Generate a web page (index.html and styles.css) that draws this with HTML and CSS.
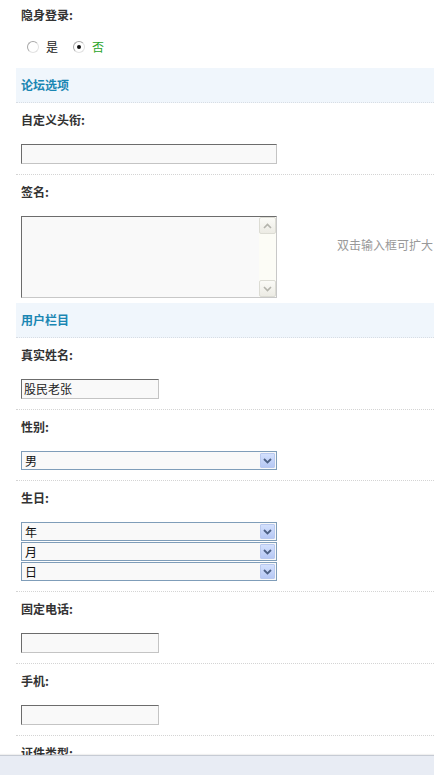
FILE: index.html
```html
<!DOCTYPE html>
<html lang="zh-CN">
<head>
<meta charset="utf-8">
<title>个人资料</title>
<link rel="stylesheet" href="styles.css">
</head>
<body>
<div class="page">
  <div class="row row-first">
    <div class="label">隐身登录:</div>
    <div class="radios">
      <span class="radio"></span><span class="opt">是</span>
      <span class="radio checked"></span><span class="opt opt-on">否</span>
    </div>
  </div>

  <div class="section">论坛选项</div>

  <div class="row">
    <div class="label">自定义头衔:</div>
    <div class="input input-long"></div>
  </div>

  <div class="row row-sign">
    <div class="label">签名:</div>
    <div class="sign-line">
      <div class="textarea">
        <div class="ta-body"></div>
        <div class="scrollbar">
          <span class="sb-btn">
            <svg width="9" height="6" viewBox="0 0 9 6"><path d="M1 5 L4.5 1.5 L8 5" fill="none" stroke="#b4b4ac" stroke-width="1.6"/></svg>
          </span>
          <span class="sb-track"></span>
          <span class="sb-btn">
            <svg width="9" height="6" viewBox="0 0 9 6"><path d="M1 1 L4.5 4.5 L8 1" fill="none" stroke="#b4b4ac" stroke-width="1.6"/></svg>
          </span>
        </div>
      </div>
      <div class="hint">双击输入框可扩大，</div>
    </div>
  </div>

  <div class="section">用户栏目</div>

  <div class="row">
    <div class="label">真实姓名:</div>
    <div class="input input-short">股民老张</div>
  </div>

  <div class="row">
    <div class="label">性别:</div>
    <div class="select">
      <span class="sel-text">男</span>
      <span class="sel-btn"><svg width="9" height="6" viewBox="0 0 9 6"><path d="M1 1 L4.5 4.5 L8 1" fill="none" stroke="#4d6185" stroke-width="1.8"/></svg></span>
    </div>
  </div>

  <div class="row">
    <div class="label">生日:</div>
    <div class="select-stack">
      <div class="select">
        <span class="sel-text">年</span>
        <span class="sel-btn"><svg width="9" height="6" viewBox="0 0 9 6"><path d="M1 1 L4.5 4.5 L8 1" fill="none" stroke="#4d6185" stroke-width="1.8"/></svg></span>
      </div>
      <div class="select">
        <span class="sel-text">月</span>
        <span class="sel-btn"><svg width="9" height="6" viewBox="0 0 9 6"><path d="M1 1 L4.5 4.5 L8 1" fill="none" stroke="#4d6185" stroke-width="1.8"/></svg></span>
      </div>
      <div class="select">
        <span class="sel-text">日</span>
        <span class="sel-btn"><svg width="9" height="6" viewBox="0 0 9 6"><path d="M1 1 L4.5 4.5 L8 1" fill="none" stroke="#4d6185" stroke-width="1.8"/></svg></span>
      </div>
    </div>
  </div>

  <div class="row">
    <div class="label">固定电话:</div>
    <div class="input input-short"></div>
  </div>

  <div class="row">
    <div class="label">手机:</div>
    <div class="input input-short"></div>
  </div>

  <div class="row">
    <div class="label">证件类型:</div>
    <div class="input input-short"></div>
  </div>
</div>
<div class="statusbar"></div>
</body>
</html>
```
FILE: styles.css
```css
html, body {
  margin: 0;
  padding: 0;
  background: #ffffff;
  overflow: hidden;
}
body {
  font-family: "Noto Sans CJK SC", "Liberation Sans", sans-serif;
  font-size: 12px;
  color: #333333;
}
.page {
  width: 640px;
  padding-left: 16px;
  display: flex;
  flex-direction: column;
}
.row {
  padding: 7px 0 10px 5px;
  border-bottom: 1px dotted #d4d4d4;
  display: flex;
  flex-direction: column;
  align-items: flex-start;
}
.row-first {
  padding-top: 5px;
  padding-bottom: 12px;
  border-bottom: none;
}
.row-sign {
  padding-bottom: 5px;
  border-bottom: none;
}
.label {
  line-height: 20px;
  height: 20px;
  font-weight: bold;
  color: #333333;
  margin-bottom: 14px;
}
.row-first .label {
  margin-bottom: 13px;
}
.radios {
  display: flex;
  align-items: center;
  height: 18px;
  padding-left: 6px;
}
.radio {
  width: 10px;
  height: 10px;
  border-radius: 50%;
  border: 1px solid #a8a8a8;
  border-right-color: #e2e2e2;
  border-bottom-color: #e2e2e2;
  background: #ffffff;
  display: flex;
  align-items: center;
  justify-content: center;
}
.radio.checked::after {
  content: "";
  width: 4px;
  height: 4px;
  border-radius: 50%;
  background: #111111;
}
.opt {
  margin-left: 7px;
  margin-right: 15px;
  line-height: 16px;
  color: #222222;
}
.opt-on {
  color: #2aa52a;
}
.section {
  height: 34px;
  line-height: 34px;
  padding-left: 5px;
  background: #f0f6fc;
  border-bottom: 1px dotted #d8dde4;
  color: #1a86b3;
  font-weight: bold;
}
.input {
  height: 18px;
  line-height: 18px;
  border: 1px solid #c4c4c4;
  border-top-color: #6c6c6c;
  border-left-color: #6c6c6c;
  background: #f9f9f9;
  padding-left: 2px;
  color: #222222;
  box-sizing: content-box;
}
.input-long {
  width: 252px;
}
.input-short {
  width: 134px;
}
.sign-line {
  display: flex;
  align-items: flex-start;
}
.textarea {
  width: 254px;
  height: 80px;
  border: 1px solid #c8c8c8;
  border-top-color: #6c6c6c;
  border-left-color: #6c6c6c;
  background: #f9f9f9;
  display: flex;
}
.ta-body {
  flex: 1;
}
.scrollbar {
  width: 17px;
  background: #fcfcf6;
  display: flex;
  flex-direction: column;
}
.sb-btn {
  width: 15px;
  height: 15px;
  border: 1px solid #dcdcd4;
  border-radius: 2px;
  background: linear-gradient(#fbfbf7, #ecebe4);
  display: flex;
  align-items: center;
  justify-content: center;
}
.sb-track {
  flex: 1;
}
.hint {
  margin-left: 60px;
  margin-top: 21px;
  line-height: 16px;
  color: #999999;
  white-space: nowrap;
}
.select-stack {
  display: flex;
  flex-direction: column;
  gap: 1px;
}
.select {
  width: 254px;
  height: 17px;
  border: 1px solid #7f9db9;
  background: #f9f9f9;
  display: flex;
  align-items: center;
}
.sel-text {
  flex: 1;
  padding-left: 3px;
  line-height: 17px;
  color: #111111;
}
.sel-btn {
  width: 15px;
  height: 15px;
  margin-right: 1px;
  border: 1px solid #b9c9ef;
  border-radius: 1px;
  box-sizing: border-box;
  background: linear-gradient(#d3e0fd, #b6c8f4);
  display: flex;
  align-items: center;
  justify-content: center;
}
.statusbar {
  position: fixed;
  left: 0;
  right: 0;
  bottom: 0;
  height: 19px;
  background: #e8ecf4;
  border-top: 1px solid #c6cbd4;
  box-shadow: 0 -1px 1px rgba(0, 0, 0, 0.06);
}
```
